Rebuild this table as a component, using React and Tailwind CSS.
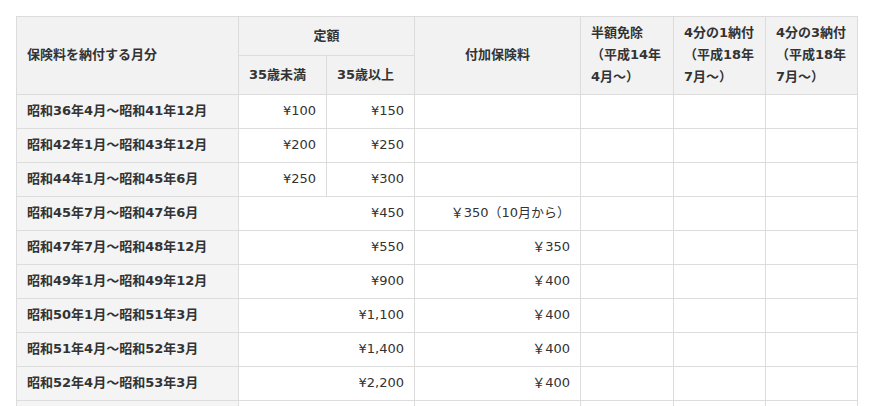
import React from 'react';

const rows = [
  { period: '昭和36年4月～昭和41年12月', under: '¥100', over: '¥150', extra: '' },
  { period: '昭和42年1月～昭和43年12月', under: '¥200', over: '¥250', extra: '' },
  { period: '昭和44年1月～昭和45年6月', under: '¥250', over: '¥300', extra: '' },
  { period: '昭和45年7月～昭和47年6月', flat: '¥450', extra: '￥350（10月から）' },
  { period: '昭和47年7月～昭和48年12月', flat: '¥550', extra: '￥350' },
  { period: '昭和49年1月～昭和49年12月', flat: '¥900', extra: '￥400' },
  { period: '昭和50年1月～昭和51年3月', flat: '¥1,100', extra: '￥400' },
  { period: '昭和51年4月～昭和52年3月', flat: '¥1,400', extra: '￥400' },
  { period: '昭和52年4月～昭和53年3月', flat: '¥2,200', extra: '￥400' },
];

const cell = 'border border-[#dcdcdc] px-[10px] pt-[5px] pb-[6px] leading-[22px] align-middle';
const head = `${cell} bg-[#f2f2f2] font-bold`;

const App = () => {
  return (
    <div
      className="bg-white pl-[16px] pt-[16px] text-[13px] text-[#333]"
      style={{ fontFamily: '"DejaVu Sans", "Noto Sans CJK JP", sans-serif' }}
    >
      <table className="table-fixed border-collapse w-[841px]">
        <colgroup>
          <col className="w-[222px]" />
          <col className="w-[88px]" />
          <col className="w-[88px]" />
          <col className="w-[166px]" />
          <col className="w-[93px]" />
          <col className="w-[92px]" />
          <col className="w-[92px]" />
        </colgroup>
        <thead>
          <tr>
            <th rowSpan={2} className={`${head} text-left`}>保険料を納付する月分</th>
            <th colSpan={2} className={`${head} text-center`}>定額</th>
            <th rowSpan={2} className={`${head} text-center`}>付加保険料</th>
            <th rowSpan={2} className={`${head} text-left`}>半額免除<br />（平成14年4月～）</th>
            <th rowSpan={2} className={`${head} text-left`}>4分の1納付<br />（平成18年7月～）</th>
            <th rowSpan={2} className={`${head} text-left`}>4分の3納付<br />（平成18年7月～）</th>
          </tr>
          <tr>
            <th className={`${head} text-left`}>35歳未満</th>
            <th className={`${head} text-left`}>35歳以上</th>
          </tr>
        </thead>
        <tbody>
          {rows.map((r) => (
            <tr key={r.period}>
              <th className={`${cell} bg-[#f4f4f4] font-bold text-left whitespace-nowrap`}>{r.period}</th>
              {r.flat ? (
                <td colSpan={2} className={`${cell} text-right`}>{r.flat}</td>
              ) : (
                <>
                  <td className={`${cell} text-right`}>{r.under}</td>
                  <td className={`${cell} text-right`}>{r.over}</td>
                </>
              )}
              <td className={`${cell} text-right`}>{r.extra}</td>
              <td className={cell}></td>
              <td className={cell}></td>
              <td className={cell}></td>
            </tr>
          ))}
          <tr>
            <th className={`${cell} bg-[#f4f4f4]`}>&nbsp;</th>
            <td colSpan={2} className={cell}></td>
            <td className={cell}></td>
            <td className={cell}></td>
            <td className={cell}></td>
            <td className={cell}></td>
          </tr>
        </tbody>
      </table>
    </div>
  );
};

export default App;
